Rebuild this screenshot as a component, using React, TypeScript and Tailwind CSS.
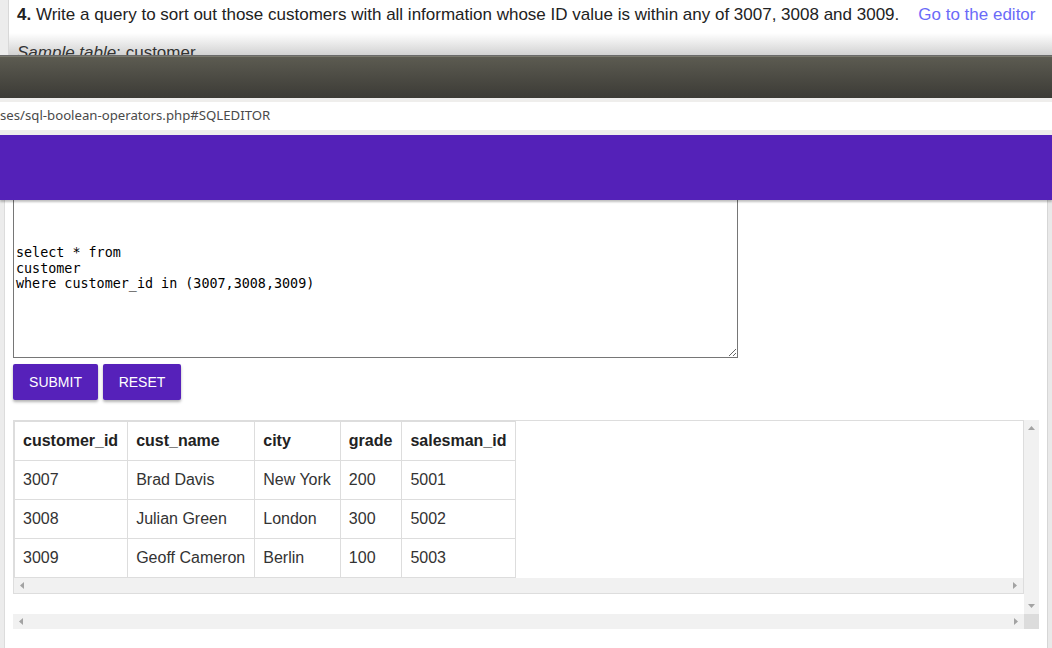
import React from 'react';

const rows = [
  { id: '3007', name: 'Brad Davis', city: 'New York', grade: '200', salesman: '5001' },
  { id: '3008', name: 'Julian Green', city: 'London', grade: '300', salesman: '5002' },
  { id: '3009', name: 'Geoff Cameron', city: 'Berlin', grade: '100', salesman: '5003' },
];

const query = 'select * from\ncustomer\nwhere customer_id in (3007,3008,3009)';

function Arrow({ dir }: { dir: 'up' | 'down' | 'left' | 'right' }) {
  const points = {
    up: '0,4 3.5,0 7,4',
    down: '0,0 7,0 3.5,4',
    left: '4,0 4,7 0,3.5',
    right: '0,0 4,3.5 0,7',
  }[dir];
  const horizontal = dir === 'left' || dir === 'right';
  return (
    <svg width={horizontal ? 4 : 7} height={horizontal ? 7 : 4} className="block">
      <polygon points={points} fill="#a3a3a3" />
    </svg>
  );
}

function HScrollbar({ className }: { className: string }) {
  return (
    <div className={`flex items-center justify-between bg-[#f1f1f1] ${className}`}>
      <Arrow dir="left" />
      <Arrow dir="right" />
    </div>
  );
}

export default function App() {
  return (
    <div className="w-[1052px] h-[648px] overflow-hidden bg-white font-['Liberation_Sans',Arial,sans-serif]">
      {/* page behind the editor */}
      <div className="relative h-[55px] overflow-hidden flex">
        <div className="absolute inset-x-0 bottom-0 h-[22px] bg-gradient-to-b from-white/0 to-[#d2d2d2]" />
        <div className="relative w-[9px] shrink-0 bg-[#ececec] border-r border-[#d8d8d8]" />
        <div className="relative pl-[8px] pt-[5px] text-[17px] leading-[20px] text-[#222]">
          <p className="whitespace-nowrap">
            <b>4.</b> Write a query to sort out those customers with all information whose ID value is within any of 3007,
            3008 and 3009.
            <span className="ml-[19px] text-[#6b6bf8]">Go to the editor</span>
          </p>
          <p className="mt-[18px] whitespace-nowrap text-[#333]">
            <i>Sample table</i>: customer
          </p>
        </div>
      </div>

      {/* browser chrome */}
      <div className="h-[43px] border-t border-[#6a6a6a] bg-gradient-to-b from-[#5d5c52] to-[#3c3b36] shadow-[inset_0_1px_0_#7a796e]" />
      <div className="h-[4px] bg-[#efeeec]" />
      <div className="h-[28px] flex items-center whitespace-nowrap font-['Noto_Sans',sans-serif] text-[13.2px] text-[#4a4a4a]">
        ses/sql-boolean-operators.php#SQLEDITOR
      </div>
      <div className="h-[5px] bg-[#efeeec]" />
      <div className="relative z-10 h-[65px] bg-[#5421b8] shadow-[0_2px_2px_rgba(0,0,0,0.25)]" />

      {/* editor */}
      <div className="flex h-[448px]">
        <div className="w-[5px] shrink-0 bg-[#ececec] border-r border-[#dcdcdc]" />
        <div className="flex-1 pl-[8px]">
          <textarea
            readOnly
            value={query}
            className="block w-[725px] h-[158px] resize border border-t-0 border-[#767676] bg-white pl-[2px] pt-[45px] font-['DejaVu_Sans_Mono',monospace] text-[13.4px] leading-[15.5px] text-black outline-none"
          />
          <div className="flex gap-[5px] mt-[6px]">
            <button className="h-[36px] w-[85px] rounded-[2px] bg-[#5621ba] text-[14px] text-white shadow-[0_2px_3px_rgba(0,0,0,0.3)]">
              SUBMIT
            </button>
            <button className="h-[36px] w-[78px] rounded-[2px] bg-[#5621ba] text-[14px] text-white shadow-[0_2px_3px_rgba(0,0,0,0.3)]">
              RESET
            </button>
          </div>

          <div className="mt-[20px] grid grid-cols-[1011px_15px] grid-rows-[194px_15px] w-[1026px]">
            <div className="bg-white">
              <div className="border border-[#dddddd] flex flex-col">
                <div className="h-[157px] bg-white">
                  <table className="border-collapse text-[16px] text-[#333]">
                    <thead>
                      <tr>
                        {['customer_id', 'cust_name', 'city', 'grade', 'salesman_id'].map((h) => (
                          <th
                            key={h}
                            className="h-[39px] border border-[#dddddd] pl-[8px] pr-[9px] text-left font-bold text-[#222] whitespace-nowrap"
                          >
                            {h}
                          </th>
                        ))}
                      </tr>
                    </thead>
                    <tbody>
                      {rows.map((r) => (
                        <tr key={r.id}>
                          {[r.id, r.name, r.city, r.grade, r.salesman].map((c, i) => (
                            <td key={i} className="h-[39px] border border-[#dddddd] pl-[8px] pr-[9px] whitespace-nowrap">
                              {c}
                            </td>
                          ))}
                        </tr>
                      ))}
                    </tbody>
                  </table>
                </div>
                <HScrollbar className="h-[15px] px-[6px]" />
              </div>
            </div>
            <div className="flex flex-col items-center justify-between bg-[#f1f1f1] py-[6px]">
              <Arrow dir="up" />
              <Arrow dir="down" />
            </div>
            <HScrollbar className="h-[15px] px-[6px]" />
            <div className="bg-[#dcdcdc]" />
          </div>
        </div>
        <div className="w-[5px] shrink-0 bg-[#e9e9e9] border-l border-[#d6d6d6]" />
      </div>
    </div>
  );
}
